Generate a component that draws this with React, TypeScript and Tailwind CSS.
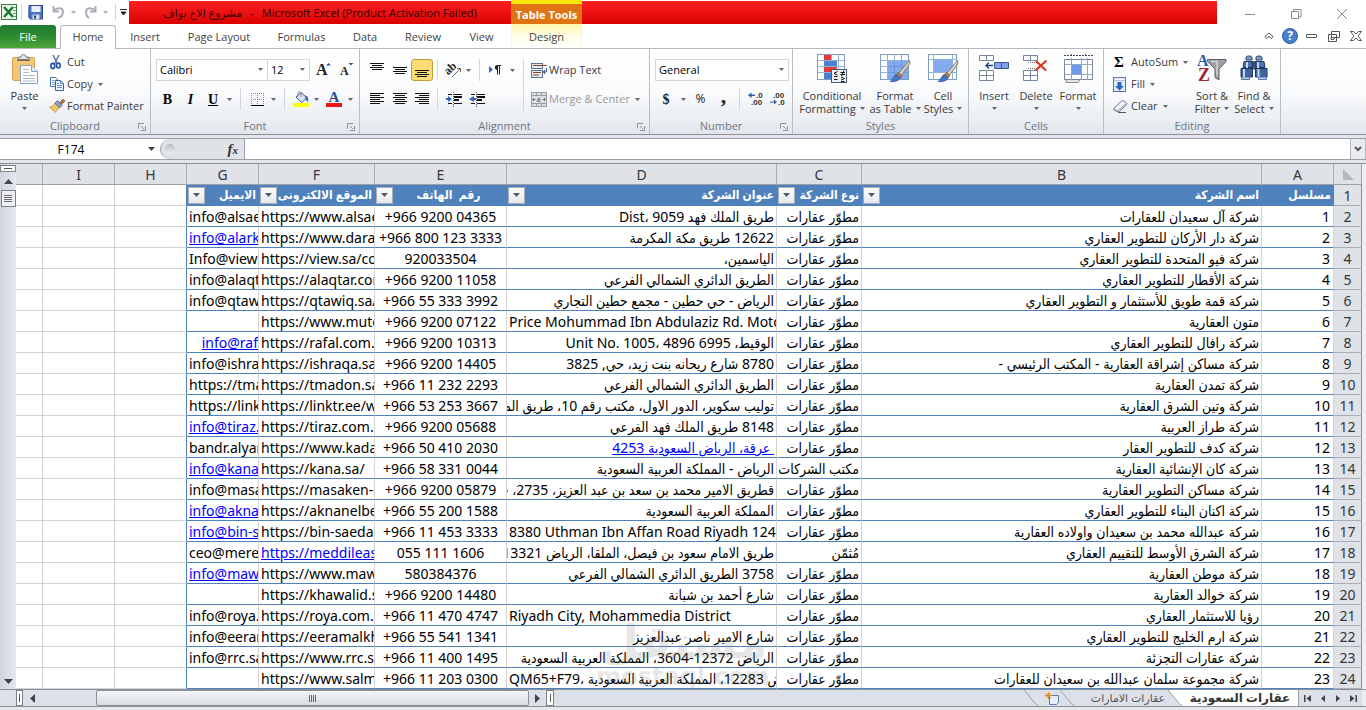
import React, { useState } from 'react';

type Row = {
  name: string;
  type?: string;
  address: string;
  addressDir?: 'ltr' | 'rtl';
  addressLink?: boolean;
  phone: string;
  site: string;
  siteLink?: boolean;
  email: string;
  emailLink?: boolean;
  emailEnd?: boolean;
};

const rows: Row[] = [
  { name: 'شركة آل سعيدان للعقارات', address: 'طريق الملك فهد 9059 ،Dist', phone: '+966 9200 04365', site: 'https://www.alsaedan', email: 'info@alsaed' },
  { name: 'شركة دار الأركان للتطوير العقاري', address: '12622 طريق مكة المكرمة', phone: '+966 800 123 3333', site: 'https://www.daralarkan', email: 'info@alarkan', emailLink: true },
  { name: 'شركة فيو المتحدة للتطوير العقاري', address: 'الياسمين،', phone: '920033504', site: 'https://view.sa/contact', email: 'Info@view.sa' },
  { name: 'شركة الأقطار للتطوير العقاري', address: 'الطريق الدائري الشمالي الفرعي', phone: '+966 9200 11058', site: 'https://alaqtar.com', email: 'info@alaqtar' },
  { name: 'شركة قمة طويق للأستثمار و التطوير العقاري', address: 'الرياض - حي حطين - مجمع حطين التجاري', phone: '+966 55 333 3992', site: 'https://qtawiq.sa/', email: 'info@qtawiq' },
  { name: 'متون العقارية', address: 'Price Mohummad Ibn Abdulaziz Rd. Motoon', addressDir: 'ltr', phone: '+966 9200 07122', site: 'https://www.mutoon', email: '' },
  { name: 'شركة رافال للتطوير العقاري', address: 'الوقيط، 6995 4896 ،Unit No. 1005', phone: '+966 9200 10313', site: 'https://rafal.com.sa', email: 'info@raf', emailLink: true, emailEnd: true },
  { name: 'شركة مساكن إشراقة العقارية - المكتب الرئيسي -', address: '8780 شارع ريحانه بنت زيد، حي, 3825', phone: '+966 9200 14405', site: 'https://ishraqa.sa/', email: 'info@ishraqa' },
  { name: 'شركة تمدن العقارية', address: 'الطريق الدائري الشمالي الفرعي', phone: '+966 11 232 2293', site: 'https://tmadon.sa/', email: 'https://tmadon' },
  { name: 'شركة وتين الشرق العقارية', address: 'توليب سكوير، الدور الاول، مكتب رقم 10، طريق الملك', phone: '+966 53 253 3667', site: 'https://linktr.ee/wateen', email: 'https://linktr.ee' },
  { name: 'شركة طراز العربية', address: '8148 طريق الملك فهد الفرعي', phone: '+966 9200 05688', site: 'https://tiraz.com.sa', email: 'info@tiraz.com', emailLink: true },
  { name: 'شركة كدف للتطوير العقار', address: '\u00a0عرقة، الرياض السعودية 4253', addressLink: true, phone: '+966 50 410 2030', site: 'https://www.kadaf', email: 'bandr.alyami' },
  { name: 'شركة كان الإنشائية العقارية', type: 'مكتب الشركات', address: 'الرياض - المملكة العربية السعودية', phone: '+966 58 331 0044', site: 'https://kana.sa/', email: 'info@kana.sa', emailLink: true },
  { name: 'شركة مساكن التطوير العقارية', address: 'قطريق الامير محمد بن سعد بن عبد العزيز، 2735، حي', phone: '+966 9200 05879', site: 'https://masaken-dev', email: 'info@masaken' },
  { name: 'شركة اكنان البناء للتطوير العقاري', address: 'المملكة العربية السعودية', phone: '+966 55 200 1588', site: 'https://aknanelbena', email: 'info@aknan', emailLink: true },
  { name: 'شركة عبدالله محمد بن سعيدان واولاده العقارية', address: '8380 Uthman Ibn Affan Road Riyadh 12475', addressDir: 'ltr', phone: '+966 11 453 3333', site: 'https://bin-saedan', email: 'info@bin-saedan', emailLink: true },
  { name: 'شركة الشرق الأوسط للتقييم العقاري', type: 'مُثمّن', address: 'طريق الامام سعود بن فيصل، الملقا، الرياض 13321', phone: '055 111 1606', site: 'https://meddileast', siteLink: true, email: 'ceo@mere' },
  { name: 'شركة موطن العقارية', address: '3758 الطريق الدائري الشمالي الفرعي', phone: '580384376', site: 'https://www.mawten', email: 'info@mawten', emailLink: true },
  { name: 'شركة خوالد العقارية', address: 'شارع أحمد بن شبانة', phone: '+966 9200 14480', site: 'https://khawalid.sa', email: '' },
  { name: 'رؤيا للاستثمار العقاري', address: 'Riyadh City, Mohammedia District', addressDir: 'ltr', phone: '+966 11 470 4747', site: 'https://roya.com.sa', email: 'info@roya.com' },
  { name: 'شركة ارم الخليج للتطوير العقاري', address: 'شارع الامير ناصر عبدالعزيز', phone: '+966 55 541 1341', site: 'https://eeramalkhaleej', email: 'info@eeram' },
  { name: 'شركة عقارات التجزئة', address: 'الرياض 12372-3604، المملكة العربية السعودية', phone: '+966 11 400 1495', site: 'https://www.rrc.sa', email: 'info@rrc.sa' },
  { name: 'شركة مجموعة سلمان عبدالله بن سعيدان للعقارات', address: 'QM65+F79، الرياض 12283، المملكة العربية السعودية', addressDir: 'ltr', phone: '+966 11 203 0300', site: 'https://www.salman', email: '' },
];

/* ---------- small shared parts ---------- */

function Caret({ className = 'text-[#5f6670]' }: { className?: string }) {
  return (
    <svg width="5" height="3" viewBox="0 0 5 3" className={`shrink-0 ${className}`} aria-hidden="true">
      <path d="M0 0h5L2.5 3z" fill="currentColor" />
    </svg>
  );
}

function Launcher() {
  return (
    <svg width="8" height="8" viewBox="0 0 8 8" fill="none" stroke="#8b929c" aria-hidden="true">
      <path d="M.5 5.500V.5H6M3 3l3 3M7.500 3v4.500H3" />
    </svg>
  );
}

function Sep({ className }: { className: string }) {
  return (
    <div className={`flex shrink-0 justify-center ${className}`}>
      <div className="w-px bg-[#d3d6db]" />
    </div>
  );
}

function Tool({ label, className, children }: { label: string; className: string; children: React.ReactNode }) {
  return (
    <button aria-label={label} className={`flex h-[22px] shrink-0 items-center justify-center ${className}`}>
      {children}
    </button>
  );
}

function Group({ title, className, launcher, children }: { title: string; className: string; launcher?: boolean; children: React.ReactNode }) {
  return (
    <section className={`flex shrink-0 flex-col border-r border-[#b9bec6] pt-0.5 ${className}`}>
      <div className="flex h-[66px]">{children}</div>
      <div className="flex h-[17px] items-center pt-0.5 text-[#6c7685]">
        <span className="w-3" />
        <span className="flex-1 text-center">{title}</span>
        <span className="w-3">{launcher && <Launcher />}</span>
      </div>
    </section>
  );
}

function BigButton({ icon, line1, line2, arrow = true, className }: { icon: React.ReactNode; line1: string; line2?: string; arrow?: boolean; className: string }) {
  return (
    <button className={`flex shrink-0 flex-col items-center whitespace-nowrap pt-[3px] leading-[13px] ${className}`}>
      <span className="mb-[5px] h-[30px]">{icon}</span>
      <span>{line1}</span>
      <span className="flex h-[13px] items-center gap-1">
        {line2}
        {arrow && <Caret />}
      </span>
    </button>
  );
}

function LineButton({ icon, text, arrow }: { icon: React.ReactNode; text: string; arrow?: boolean }) {
  return (
    <button className="flex h-[22px] items-center whitespace-nowrap">
      <span className="flex w-[18px] shrink-0">{icon}</span>
      {text}
      {arrow && <Caret className="ml-[5px] text-[#5f6670]" />}
    </button>
  );
}

function Lines({ xs, y = 0 }: { xs: [number, number][]; y?: number }) {
  return (
    <svg width="16" height="16" viewBox="0 0 16 16" stroke="#111" shapeRendering="crispEdges" aria-hidden="true">
      {xs.map(([a, b], i) => (
        <path key={i} d={`M${a} ${y + i * 2 + 0.5}H${b}`} />
      ))}
    </svg>
  );
}

/* ---------- ribbon drawings ---------- */

const PasteIcon = () => (
  <svg width="28" height="30" viewBox="0 0 28 30" aria-hidden="true">
    <rect x="1.500" y="3.500" width="22" height="23" rx="1.500" fill="#f3c678" stroke="#d9a350" />
    <path d="M7 5.500V3.200h3C10 1.400 11 .6 12.500.6S15 1.400 15 3.200h3v2.300z" fill="#e4e6e9" stroke="#6f7680" />
    <path d="M6 6.500h13" stroke="#83694a" />
    <path d="M9.500 11.500h11l6 6v12h-17z" fill="#fff" stroke="#8ba1c4" />
    <path d="M20.500 11.500v6h6" fill="#dfe7f3" stroke="#8ba1c4" />
    <path d="M12 15.500h6M12 18.500h6M12 21.500h12M12 24.500h12M12 27h12" stroke="#a9b9d4" />
  </svg>
);

const CutIcon = () => (
  <svg width="15" height="15" viewBox="0 0 15 15" fill="none" aria-hidden="true">
    <path d="M4 0l4.500 9M10 0L5.500 9" stroke="#62768f" strokeWidth="1.500" />
    <ellipse cx="3.800" cy="11" rx="2" ry="2.600" stroke="#23569f" strokeWidth="1.600" />
    <ellipse cx="9.400" cy="10.500" rx="1.800" ry="2.500" stroke="#23569f" strokeWidth="1.600" />
  </svg>
);

const CopyIcon = () => (
  <svg width="16" height="14" viewBox="0 0 16 14" aria-hidden="true">
    <path d="M1.500.5h5l3 3v6h-8z" fill="#fff" stroke="#4873b3" />
    <path d="M3 3.500h3M3 5.500h4M3 7.500h4" stroke="#7ca0d3" />
    <path d="M6.500 3.500h5l3 3v7h-8z" fill="#eef4fc" stroke="#3a62a3" />
    <path d="M11.500 3.500v3h3M8 8.500h5M8 10.500h5M8 6.500h2" fill="none" stroke="#6490cc" />
  </svg>
);

const PainterIcon = () => (
  <svg width="17" height="14" viewBox="0 0 17 14" aria-hidden="true">
    <path d="M10 4l4-4 2 2-4 4z" fill="#b5723a" stroke="#7c5127" strokeWidth=".6" />
    <path d="M6 4l2.500-2.500L13 6.500 10.500 9z" fill="#8fa6cc" stroke="#3d5a93" strokeWidth=".8" />
    <path d="M5.500 4.500L10 9l-4 4.500L.5 8C3 8 4.500 6.500 5.500 4.500z" fill="#f5d67c" stroke="#b58b2a" strokeWidth=".8" />
    <path d="M3 8.500l3 3M5 7l3 3" stroke="#c79a35" strokeWidth=".8" />
  </svg>
);

const BorderIcon = () => (
  <svg width="13" height="13" viewBox="0 0 13 13" shapeRendering="crispEdges" fill="none" aria-hidden="true">
    <path d="M0 .5h13M0 6.500h13M.5 0v12M6.500 0v12M12.500 0v12" stroke="#8a8a8a" strokeDasharray="1 1" />
    <path d="M0 12.500h13" stroke="#000" />
  </svg>
);

const FillColorIcon = () => (
  <svg width="17" height="16" viewBox="0 0 17 16" aria-hidden="true">
    <path d="M3 6l5-4.500L14 7l-5.500 4.500z" fill="#dce6f4" stroke="#41577c" />
    <path d="M5 5.500V2.500C5 0 8 0 8 2.500V6" fill="none" stroke="#7c889b" />
    <path d="M12 4.500c3 .5 4 3 3 6.500-1.500-1-2.500-2.500-3-4z" fill="#3f72b8" />
    <path d="M0 12h16v4H0z" fill="#ff0" />
  </svg>
);

const OrientationIcon = () => (
  <svg width="17" height="16" viewBox="0 0 17 16" aria-hidden="true">
    <text x="0" y="10" transform="rotate(-42 6 8)" fontSize="12" fontWeight="700" fontFamily="Liberation Serif, serif" fill="#222">ab</text>
    <path d="M7 15l8.500-8.500M12 6.500h3.500V10" fill="none" stroke="#666" />
  </svg>
);

const DirectionIcon = () => (
  <svg width="13" height="10" viewBox="0 0 13 10" aria-hidden="true">
    <path d="M0 1l4 3.500L0 8z" fill="#3566b5" />
    <path d="M12 .5H8M8.500.5v9M10.500.5v9" stroke="#222" fill="none" />
    <path d="M8.500 0C5 0 5 5 8.500 5z" fill="#222" />
  </svg>
);

const IndentIcon = ({ flip }: { flip?: boolean }) => (
  <svg width="17" height="15" viewBox="0 0 17 15" shapeRendering="crispEdges" aria-hidden="true">
    <path d="M2 2.500h4M8 2.500h8M8 5.500h8M8 8.500h5M2 11.500h4M8 11.500h8" stroke="#111" />
    <path d="M8 4.500h8M8 7.500h5" stroke="#111" />
    <path d="M7.500 0v15" stroke="#555" strokeDasharray="1 1" />
    <path d={flip ? 'M5 4v6L0 7z' : 'M2 4v6l4-3z'} fill="#2f62b3" shapeRendering="auto" />
    <path d={flip ? 'M5 7h2' : 'M0 7h3'} stroke="#2f62b3" strokeWidth="2" />
  </svg>
);

const WrapIcon = () => (
  <svg width="17" height="15" viewBox="0 0 17 15" aria-hidden="true" fill="none">
    <rect x=".5" y=".5" width="11" height="5" fill="#e6edf7" stroke="#5c7194" />
    <path d="M2 2.500h14" stroke="#8a3f28" />
    <rect x=".5" y="7.500" width="11" height="7" fill="#e6edf7" stroke="#5c7194" />
    <path d="M2 9.500h8M2 12h6" stroke="#8a3f28" />
    <path d="M15.500 5v4H13" stroke="#3a5f9a" />
    <path d="M14 6.500L11.500 9l2.500 2.500z" fill="#3a5f9a" />
  </svg>
);

const MergeIcon = () => (
  <svg width="16" height="15" viewBox="0 0 16 15" aria-hidden="true" fill="none" stroke="#9a9fa6">
    <rect x=".5" y=".5" width="15" height="14" fill="#dddfe2" />
    <path d="M.5 3.500h15M.5 11.500h15M5.500.5v3M10.500.5v3M5.500 11.500v3M10.500 11.500v3" />
    <path d="M1.500 7.500h3M3 6L1.500 7.500 3 9M14.500 7.500h-3M13 6l1.500 1.500L13 9" stroke="#777" />
    <text x="5.500" y="10" fontSize="8" fontWeight="700" fontFamily="Liberation Serif, serif" fill="#777" stroke="none">a</text>
  </svg>
);

const DecimalIcon = ({ less }: { less?: boolean }) => (
  <svg width="16" height="14" viewBox="0 0 16 14" aria-hidden="true">
    <text x={less ? 3 : 8} y="6" fontSize="8" fontWeight="700" fontFamily="Liberation Sans, sans-serif" fill="#333">{less ? '.00' : '.0'}</text>
    <text x={less ? 8 : 3} y="13" fontSize="8" fontWeight="700" fontFamily="Liberation Sans, sans-serif" fill="#333">{less ? '.0' : '.00'}</text>
    <path d={less ? 'M0 9.500h4v-2l3 2.500-3 2.500v-2H0z' : 'M7 2.500H3.500V.5L0 3.200 3.500 6V4H7z'} fill="#2f62b3" />
  </svg>
);

const Grid = ({ w = 27 }: { w?: number }) => (
  <>
    <rect x=".5" y=".5" width={w} height="25" fill="#fff" stroke="#7f9cc0" />
    <path d={`M7.500.5v25M14.500.5v25M21.500.5v25M.5 6.500h${w}M.5 12.500h${w}M.5 18.500h${w}`} stroke="#8fb4d8" />
  </>
);

const Brush = () => (
  <>
    <path d="M29.500 6.500L18 20l2.500 2.500L30 9.500z" fill="#d8d4ca" stroke="#75706a" strokeWidth=".9" />
    <path d="M18.500 18.500l3.500 3-2 2.500-4-3z" fill="#b8784a" stroke="#7a4b2a" strokeWidth=".6" />
    <path d="M16 20.500l4 3.500c-2 3.500-6 4-10 3.500 2.500-1 3-5 6-7z" fill="#4478c4" stroke="#2a5596" strokeWidth=".8" />
  </>
);

const ConditionalIcon = () => (
  <svg width="31" height="29" viewBox="0 0 31 29" aria-hidden="true">
    <Grid />
    <path d="M7 1h7v5H7zM7 13h13v5H7z" fill="#dd3b3b" />
    <path d="M7 7h13v5H7zM7 19h7v6H7z" fill="#4a80cd" />
    <rect x="14.500" y="15.500" width="15" height="13" fill="#eef2f7" stroke="#4c5c73" />
    <path d="M20.500 17.500l-3.500 1.800 3.500 1.800M17 22.500h3.500M24 23l3.500 1.500-3.500 1.500M24 27.500h3.500M17 25.500h3.500M23.500 18.500h4.500M23.500 20.500h4.500M27 16.500l-2.500 5.500" fill="none" stroke="#111" />
  </svg>
);

const FormatTableIcon = () => (
  <svg width="31" height="29" viewBox="0 0 31 29" aria-hidden="true">
    <Grid w={28} />
    <path d="M8 7h20v18H8z" fill="#86aaf0" />
    <path d="M14.500 7v18M21.500 7v18M8 12.500h20M8 18.500h20" stroke="#6f94d8" />
    <Brush />
  </svg>
);

const CellStylesIcon = () => (
  <svg width="31" height="29" viewBox="0 0 31 29" aria-hidden="true">
    <rect x=".5" y=".5" width="28" height="25" fill="#fff" stroke="#7f9cc0" />
    <path d="M5.500.5v25M24.500.5v25M.5 5.500h28M.5 18.500h28" stroke="#8fb4d8" />
    <path d="M6 6h18v12H6z" fill="#86aaf0" />
    <Brush />
  </svg>
);

const InsertIcon = () => (
  <svg width="31" height="28" viewBox="0 0 31 28" aria-hidden="true">
    <path d="M.5 1.500h14v5H.5zM7.500 1.500v5M.5 16.500h14v10H.5zM7.500 16.500v10M.5 21.500h14" fill="#fff" stroke="#76879f" />
    <path d="M15.500 8.500h14v6h-14z" fill="#7fa3ea" stroke="#38598f" />
    <path d="M22.500 8.500v6" stroke="#38598f" />
    <path d="M14 11.500H7M10 8.500l-3 3 3 3" fill="none" stroke="#1d3d78" strokeWidth="1.300" />
  </svg>
);

const DeleteIcon = () => (
  <svg width="26" height="28" viewBox="0 0 26 28" aria-hidden="true">
    <path d="M.5 1.500h14v5H.5zM7.500 1.500v5M.5 16.500h14v10H.5zM7.500 16.500v10M.5 21.500h14" fill="#fff" stroke="#76879f" />
    <path d="M5 8.500h10M5 14.500h10" stroke="#666" strokeDasharray="1 1" />
    <path d="M13 7l10 9.500M23.500 6.500L12.500 16.500" stroke="#e0351b" strokeWidth="2.200" />
  </svg>
);

const FormatIcon = () => (
  <svg width="31" height="30" viewBox="0 0 31 30" aria-hidden="true">
    <path d="M1 1.500h29M8.500 0v3M22.500 0v3" stroke="#3b4a60" strokeDasharray="2 1" />
    <path d="M1.500 5.500h28v20h-28z" fill="#fff" stroke="#76879f" />
    <path d="M8.500 4v22M18.500 4v22M24.500 4v22M1.500 10.500h28M1.500 20.500h28" stroke="#93a6c4" />
    <path d="M9 11h9v9H9z" fill="#6f98ea" />
    <path d="M3 26v2.500h12l2-2.500" fill="#e5e5e5" stroke="#8b8b8b" />
  </svg>
);

const FillDownIcon = () => (
  <svg width="13" height="15" viewBox="0 0 13 15" aria-hidden="true">
    <rect x=".5" y=".5" width="12" height="14" fill="#e4ecf8" stroke="#5471a3" />
    <path d="M1 1h11v2.500H1z" fill="#fff" stroke="#8aa2cb" strokeWidth=".6" />
    <path d="M4.500 5h4v4H11l-4.500 4.500L2 9h2.500z" fill="#2d68c0" />
  </svg>
);

const ClearIcon = () => (
  <svg width="15" height="13" viewBox="0 0 15 13" aria-hidden="true">
    <path d="M.8 8.500L8 1.500C9 .6 10 .5 11 1l2.300 1.700c.7.6.7 1.400 0 2.200L6.500 11.500H3.500L1 10z" fill="#eef1f6" stroke="#6c7b93" />
    <path d="M1 8.500L4.500 11 13 4" fill="none" stroke="#8d9ab0" />
    <path d="M5 12.500h8" stroke="#555" />
  </svg>
);

const SortIcon = () => (
  <svg width="31" height="31" viewBox="0 0 31 31" aria-hidden="true">
    <path d="M10.500 5.500h18.500v2l-7 7.500v11l-4-2.500V15l-7.500-7.500z" fill="#9c9fa4" stroke="#5c6066" />
    <path d="M14 7.500h6v14" stroke="#d4d6d9" strokeWidth="1.500" fill="none" />
    <text x="0" y="12" fontSize="16" fontWeight="700" fontFamily="Liberation Serif, serif" fill="#2c5ca8">A</text>
    <text x="1" y="27" fontSize="18" fontWeight="700" fontFamily="Liberation Serif, serif" fill="#a3262a">Z</text>
  </svg>
);

const FindIcon = () => (
  <svg width="28" height="28" viewBox="0 0 28 28" aria-hidden="true">
    <path d="M6 3.500C6 1.500 12 1.500 12 3.500V6H6zM16 3.500c0-2 6-2 6 0V6h-6z" fill="#7f9fc8" stroke="#2b4470" />
    <path d="M4 7.500h9v6H3zM15 7.500h9l1 6H15zM12 8h4v7h-4z" fill="#4c74b0" stroke="#22395f" />
    <path d="M1 14.500h11.500v8.500H1zM15.500 14.500H27v8.500H15.500z" fill="#3e66a2" stroke="#1f3558" />
    <path d="M1.500 23h8v2.500h-8zM18.500 23h8v2.500h-8z" fill="#b9cbe6" stroke="#5a77a6" />
    <path d="M4 15v8M18.500 15v8M7 8v6M18 8v6" stroke="#c4d6f0" strokeWidth="2" />
  </svg>
);

/* ---------- window chrome ---------- */

function TitleBar() {
  return (
    <div className="flex h-6">
      <div className="flex w-[129px] shrink-0 items-center pl-px">
        <svg width="17" height="17" viewBox="0 0 17 17" aria-label="Excel">
          <rect x=".5" y=".5" width="15" height="15" fill="#e9f4e7" stroke="#2e7b38" />
          <path d="M3 3l9 10M12 3L3 13" stroke="#1d7a32" strokeWidth="2.600" />
          <path d="M12 3.500h3M12 6.500h3M12 9.500h3M12 12.500h3" stroke="#5ba866" />
        </svg>
        <Sep className="ml-[3px] h-4 w-px" />
        <button aria-label="Save" className="ml-[6px]">
          <svg width="16" height="15" viewBox="0 0 16 15">
            <path d="M1 .5h13.500v13.500H2.500L.8 12.500z" fill="#4a74c8" stroke="#2c4a92" />
            <path d="M3.500 1h9v6h-9z" fill="#e8f0fb" />
            <path d="M4.500 9.500h7V14h-7z" fill="#d5dbe6" />
            <path d="M6 10.500h2v3H6z" fill="#253f7c" />
          </svg>
        </button>
        <button aria-label="Undo" className="ml-2">
          <svg width="13" height="14" viewBox="0 0 13 14" fill="none" stroke="#a9adb3">
            <path d="M1.500 1v5.500H7" strokeWidth="2" />
            <path d="M2 6c3-4 9-3.500 9 1 0 3-2 5-5 6" strokeWidth="2" />
          </svg>
        </button>
        <Caret className="ml-[6px] text-[#a9adb3]" />
        <button aria-label="Redo" className="ml-[8px]">
          <svg width="13" height="14" viewBox="0 0 13 14" fill="none" stroke="#a9adb3">
            <path d="M11.500 1v5.500H6" strokeWidth="2" />
            <path d="M11 6C8 2 2 2.500 2 7c0 3 1 5 3 6" strokeWidth="2" />
          </svg>
        </button>
        <Caret className="ml-[6px] text-[#a9adb3]" />
        <Sep className="ml-[7px] h-4 w-px" />
        <button aria-label="Customize Quick Access Toolbar" className="ml-1">
          <svg width="7" height="7" viewBox="0 0 7 7">
            <path d="M0 .5h7M1 3h5L3.500 6z" fill="#222" stroke="#222" />
          </svg>
        </button>
      </div>
      <div className="mt-px flex w-[382px] shrink-0 items-center justify-center bg-linear-to-b from-[#ff1f1f] to-[#d90000] pt-0.5 text-[#3b0000]">
        <h1 dir="ltr" className="flex gap-2 font-['Noto_Sans','DejaVu_Sans',sans-serif] text-[11px] whitespace-nowrap">
          <bdi>مشروع الاخ نواف</bdi>
          <span>-</span>
          <span>Microsoft Excel (Product Activation Failed)</span>
        </h1>
      </div>
      <div className="flex w-[71px] shrink-0 items-center justify-center border-t-4 border-[#ffe60a] bg-[#e07412] pt-0.5 text-[11px] font-bold whitespace-nowrap text-white">
        Table Tools
      </div>
      <div className="mt-px flex-1 bg-linear-to-b from-[#ff1f1f] to-[#d90000]" />
      <div className="flex w-[149px] shrink-0 items-center justify-between pt-1 pr-[19px] pl-7 text-[#8c8c8c]">
        <button aria-label="Minimize">
          <svg width="10" height="10" viewBox="0 0 10 10" stroke="currentColor"><path d="M0 5.500h10" /></svg>
        </button>
        <button aria-label="Restore">
          <svg width="11" height="11" viewBox="0 0 11 11" fill="none" stroke="currentColor"><path d="M.5 2.500h7v7h-7zM2.500 2.500v-2h7.500v7.500h-2" /></svg>
        </button>
        <button aria-label="Close">
          <svg width="10" height="10" viewBox="0 0 10 10" stroke="currentColor"><path d="M0 0l10 10M10 0L0 10" /></svg>
        </button>
      </div>
    </div>
  );
}

function TabBar() {
  return (
    <nav className="flex h-[25px] border-b border-[#b4b8be] text-[#444]">
      <button className="mt-px w-14 shrink-0 rounded-t-[3px] bg-linear-to-b from-[#1f7a2f] via-[#2d8a31] to-[#4fa83c] pt-0.5 text-white">File</button>
      <button className="-mb-px ml-1 mt-px w-14 shrink-0 rounded-t-[3px] border border-b-0 border-[#b4b8be] bg-white">Home</button>
      <button className="w-[58px] shrink-0 pt-0.5">Insert</button>
      <button className="w-[90px] shrink-0 pt-0.5">Page Layout</button>
      <button className="w-[75px] shrink-0 pt-0.5">Formulas</button>
      <button className="w-[52px] shrink-0 pt-0.5">Data</button>
      <button className="w-[64px] shrink-0 pt-0.5">Review</button>
      <button className="w-[53px] shrink-0 pt-0.5">View</button>
      <button className="ml-[3px] w-[71px] shrink-0 border-x border-[#f8f3dc] bg-linear-to-b from-[#fdf7a8] via-[#fffde6] to-white pt-0.5">Design</button>
      <div className="ml-auto flex items-center gap-2 pr-1">
        <button aria-label="Minimize the Ribbon">
          <svg width="10" height="8" viewBox="0 0 10 8" fill="#fff" stroke="#555"><path d="M5 1L1 4.500 2.500 6.500 5 4.500 7.500 6.500 9 4.500z" /></svg>
        </button>
        <button aria-label="Help" className="flex size-4 items-center justify-center rounded-full border border-[#2c59a8] bg-[#4a7fd0] text-[12px] leading-none font-bold text-white">?</button>
        <button aria-label="Minimize Window" className="w-[14px]">
          <svg width="12" height="5" viewBox="0 0 12 5" fill="#fff" stroke="#555"><rect x=".5" y=".5" width="10" height="3" rx=".5" /></svg>
        </button>
        <button aria-label="Restore Window" className="w-[14px]">
          <svg width="13" height="11" viewBox="0 0 13 11" fill="#fff" stroke="#555"><path d="M3.500.5h8v6h-8zM.5 3.500h8v7h-8zM3 6.500h3v2H3z" /></svg>
        </button>
        <button aria-label="Close Window">
          <svg width="12" height="10" viewBox="0 0 12 10" fill="#fff" stroke="#555"><path d="M.5.5h3L6 3 8.500.5h3L8 5l3.500 4.500h-3L6 7 3.500 9.500h-3L4 5z" /></svg>
        </button>
      </div>
    </nav>
  );
}

function Picker({ label, value, className }: { label: string; value: string; className: string }) {
  return (
    <div className={`relative flex h-[22px] shrink-0 ${className}`}>
      <select aria-label={label} className="w-full appearance-none border border-[#d3d6db] bg-white pl-[3px] text-black" defaultValue={value}>
        <option>{value}</option>
      </select>
      <span className="pointer-events-none absolute top-[9px] right-[5px]">
        <Caret />
      </span>
    </div>
  );
}

function Ribbon() {
  return (
    <div className="flex overflow-hidden border-b border-[#8b9097] bg-linear-to-b from-white via-[#fafbfc] to-[#e3e7ed] text-[#3a3a3a]">
      <Group title="Clipboard" className="w-[151px]" launcher>
        <BigButton icon={<PasteIcon />} line1="Paste" className="w-[49px]" />
        <div className="flex flex-col">
          <LineButton icon={<CutIcon />} text="Cut" />
          <LineButton icon={<CopyIcon />} text="Copy" arrow />
          <LineButton icon={<PainterIcon />} text="Format Painter" />
        </div>
      </Group>

      <Group title="Font" className="w-[209px]" launcher>
        <div className="flex flex-col gap-[7px] pt-2 pl-[5px]">
          <div className="flex">
            <Picker label="Font" value="Calibri" className="w-[112px]" />
            <Picker label="Font size" value="12" className="-ml-px w-[43px]" />
            <Tool label="Grow Font" className="w-[26px]">
              <svg width="15" height="16" viewBox="0 0 15 16">
                <text x="0" y="13" fontSize="16" fontWeight="700" fontFamily="Liberation Serif, serif" fill="#222">A</text>
                <path d="M10 3.500h5L12.500 1z" fill="#2f4f8f" />
              </svg>
            </Tool>
            <Tool label="Shrink Font" className="w-[22px]">
              <svg width="14" height="16" viewBox="0 0 14 16">
                <text x="0" y="13" fontSize="12" fontWeight="700" fontFamily="Liberation Serif, serif" fill="#222">A</text>
                <path d="M8.500 1h5L11 3.500z" fill="#2f4f8f" />
              </svg>
            </Tool>
          </div>
          <div className="flex font-['Liberation_Serif',serif] text-[14px] font-bold text-black">
            <Tool label="Bold" className="w-[23px]">B</Tool>
            <Tool label="Italic" className="w-[23px] italic">I</Tool>
            <Tool label="Underline" className="w-[22px] underline">U</Tool>
            <Tool label="Underline options" className="w-[11px]"><Caret /></Tool>
            <Sep className="h-[22px] w-[11px]" />
            <Tool label="Borders" className="w-[22px]"><BorderIcon /></Tool>
            <Tool label="Border options" className="w-[11px]"><Caret /></Tool>
            <Sep className="h-[22px] w-[11px]" />
            <Tool label="Fill Color" className="w-[22px]"><FillColorIcon /></Tool>
            <Tool label="Fill Color options" className="w-[9px]"><Caret /></Tool>
            <Tool label="Font Color" className="w-[25px]">
              <svg width="16" height="16" viewBox="0 0 16 16">
                <text x="2.500" y="11" fontSize="15" fontWeight="700" fontFamily="Liberation Serif, serif" fill="#2c4f90">A</text>
                <path d="M0 12h16v4H0z" fill="#f01414" />
              </svg>
            </Tool>
            <Tool label="Font Color options" className="w-[9px]"><Caret /></Tool>
          </div>
        </div>
      </Group>

      <Group title="Alignment" className="w-[290px]" launcher>
        <div className="flex pt-2 pl-[5px]">
          <div className="flex w-[153px] flex-col gap-[7px]">
            <div className="flex">
              <Tool label="Top Align" className="w-[23px]"><Lines y={1} xs={[[1, 15], [3, 13], [1, 15], [3, 13]]} /></Tool>
              <Tool label="Middle Align" className="w-[23px]"><Lines y={5} xs={[[1, 15], [3, 13], [1, 15], [3, 13]]} /></Tool>
              <Tool label="Bottom Align" className="w-[22px] rounded-[3px] border border-[#c29b3a] bg-[#fbdc77]"><Lines y={8} xs={[[1, 15], [3, 13], [1, 15], [3, 13]]} /></Tool>
              <Sep className="h-[22px] w-[9px]" />
              <Tool label="Orientation" className="w-[22px]"><OrientationIcon /></Tool>
              <Tool label="Orientation options" className="w-[9px]"><Caret /></Tool>
              <Sep className="h-[22px] w-3" />
              <Tool label="Text Direction" className="w-[21px]"><DirectionIcon /></Tool>
              <Tool label="Text Direction options" className="w-3"><Caret /></Tool>
            </div>
            <div className="flex">
              <Tool label="Align Left" className="w-[23px]"><Lines y={2} xs={[[1, 15], [1, 11], [1, 15], [1, 11], [1, 15], [1, 11]]} /></Tool>
              <Tool label="Center" className="w-[23px]"><Lines y={2} xs={[[1, 15], [3, 13], [1, 15], [3, 13], [1, 15], [3, 13]]} /></Tool>
              <Tool label="Align Right" className="w-[22px]"><Lines y={2} xs={[[1, 15], [5, 15], [1, 15], [5, 15], [1, 15], [5, 15]]} /></Tool>
              <Sep className="h-[22px] w-[9px]" />
              <Tool label="Decrease Indent" className="w-6"><IndentIcon /></Tool>
              <Tool label="Increase Indent" className="w-[22px]"><IndentIcon flip /></Tool>
            </div>
          </div>
          <Sep className="h-[52px] w-[10px]" />
          <div className="flex flex-col gap-[7px] pl-[3px]">
            <LineButton icon={<WrapIcon />} text="Wrap Text" />
            <div className="text-[#9a9a9a]">
              <LineButton icon={<MergeIcon />} text="Merge & Center" arrow />
            </div>
          </div>
        </div>
      </Group>

      <Group title="Number" className="w-[143px]" launcher>
        <div className="flex flex-col gap-[7px] pt-2 pl-[5px]">
          <Picker label="Number format" value="General" className="w-[134px]" />
          <div className="flex text-[12px] font-bold text-[#222]">
            <Tool label="Accounting Number Format" className="w-[22px] font-['Liberation_Serif',serif] text-[14px]">$</Tool>
            <Tool label="Accounting options" className="w-3"><Caret /></Tool>
            <Tool label="Percent Style" className="w-[23px] font-normal">%</Tool>
            <Tool label="Comma Style" className="w-[23px] pb-2 font-['Liberation_Serif',serif] text-[22px]">,</Tool>
            <Sep className="h-[22px] w-[9px]" />
            <Tool label="Increase Decimal" className="w-[23px]"><DecimalIcon /></Tool>
            <Tool label="Decrease Decimal" className="w-[22px]"><DecimalIcon less /></Tool>
          </div>
        </div>
      </Group>

      <Group title="Styles" className="w-[176px]">
        <div className="flex pl-1">
          <BigButton icon={<ConditionalIcon />} line1="Conditional" line2="Formatting" className="w-[70px]" />
          <BigButton icon={<FormatTableIcon />} line1="Format" line2="as Table" className="w-14" />
          <BigButton icon={<CellStylesIcon />} line1="Cell" line2="Styles" className="w-10" />
        </div>
      </Group>

      <Group title="Cells" className="w-[135px]">
        <div className="flex pl-[5px]">
          <BigButton icon={<InsertIcon />} line1="Insert" className="w-10" />
          <BigButton icon={<DeleteIcon />} line1="Delete" className="w-11" />
          <BigButton icon={<FormatIcon />} line1="Format" className="w-10" />
        </div>
      </Group>

      <Group title="Editing" className="w-[177px]">
        <div className="flex w-[87px] flex-col pl-[9px]">
          <LineButton icon={<span className="pl-px font-['Liberation_Serif',serif] text-[15px] leading-none font-bold text-black">Σ</span>} text="AutoSum" arrow />
          <LineButton icon={<FillDownIcon />} text="Fill" arrow />
          <LineButton icon={<ClearIcon />} text="Clear" arrow />
        </div>
        <BigButton icon={<SortIcon />} line1="Sort &" line2="Filter" className="w-[42px]" />
        <BigButton icon={<FindIcon />} line1="Find &" line2="Select" className="w-[42px]" />
      </Group>
    </div>
  );
}

function FormulaBar() {
  const [name, setName] = useState('F174');
  return (
    <div className="border-b border-[#8b9097] bg-[#e3e6eb] pt-[3px] pb-[3px]">
      <div className="flex h-[22px] border-y border-[#9a9fa8] bg-white">
        <input
          aria-label="Name Box"
          value={name}
          onChange={(e) => setName(e.target.value)}
          className="w-[142px] shrink-0 pt-0.5 text-center text-[12px] text-black outline-none"
        />
        <button aria-label="Name list" className="flex w-[18px] shrink-0 items-center justify-center">
          <svg width="7" height="4" viewBox="0 0 7 4"><path d="M0 0h7L3.500 4z" fill="#444" /></svg>
        </button>
        <div className="flex w-[85px] shrink-0 items-center justify-between rounded-l-full border-x border-[#9a9fa8] bg-[#dfe2e7] pr-1.5 pl-1">
          <span className="size-2.5 rounded-full bg-linear-to-b from-[#b5b9bf] to-[#f2f3f5]" />
          <button aria-label="Insert Function" className="font-['Liberation_Serif',serif] text-[15px] leading-none font-bold text-[#333] italic">
            f<span className="text-[11px]">x</span>
          </button>
        </div>
        <input aria-label="Formula Bar" className="min-w-0 flex-1 px-1 outline-none" />
        <button aria-label="Expand Formula Bar" className="flex w-4 shrink-0 items-center justify-center border-x border-[#b4b8be] bg-[#e9ebef]">
          <svg width="8" height="6" viewBox="0 0 8 6" fill="none" stroke="#555" strokeWidth="2"><path d="M1 1l3 3 3-3" /></svg>
        </button>
      </div>
    </div>
  );
}

/* ---------- sheet ---------- */

function HeadCell({ text, center }: { text: string; center?: boolean }) {
  return (
    <th className="h-[21px] border-b border-[#4f81bd] bg-[#4f81bd] p-0 pr-[3px] pl-px text-[12px] font-bold text-white">
      <div className="flex h-5 items-center justify-between overflow-hidden">
        <span className={center ? 'flex-1 text-center whitespace-pre' : 'whitespace-nowrap'}>{text}</span>
        <button aria-label={`Filter ${text}`} className="flex size-[17px] shrink-0 items-center justify-center border border-[#a9adb5] bg-linear-to-b from-white to-[#e4e7ec]">
          <svg width="7" height="4" viewBox="0 0 7 4"><path d="M0 0h7L3.500 4z" fill="#555b66" /></svg>
        </button>
      </div>
    </th>
  );
}

function Cell({ text, dir = 'rtl', align = 'text-start', href }: { text: string; dir?: 'ltr' | 'rtl'; align?: string; href?: boolean }) {
  return (
    <td className="h-[21px] border-r border-b border-r-[#d4d4d4] border-b-[#4f81bd] p-0">
      <div dir={dir} className={`h-5 overflow-hidden leading-[22px] whitespace-nowrap ${align}`}>
        {href ? <a href="#" className="text-[#0000ff] underline">{text}</a> : text}
      </div>
    </td>
  );
}

// empty cells left of the table: the first one carries the table's edge
function BlankCells() {
  return (
    <>
      <td className="border-r border-b border-r-[#4f81bd] border-b-[#d4d4d4]" />
      <td className="border-r border-b border-[#d4d4d4]" />
      <td className="border-r border-b border-[#d4d4d4]" />
    </>
  );
}

function RowNumber({ n }: { n: number }) {
  return (
    <th className="h-[21px] border-r border-b border-r-[#8b9097] border-b-[#a9aeb6] bg-[#dfe2e7] p-0 text-[#33373d]">
      <div className="h-5 overflow-hidden leading-[22px] font-normal">{n}</div>
    </th>
  );
}

const letters = ['A', 'B', 'C', 'D', 'E', 'F', 'G', 'H', 'I', ''];

function Sheet() {
  return (
    <div className="flex">
      <div className="flex w-4 shrink-0 flex-col items-center bg-linear-to-r from-[#cfd4de] to-[#e4e8f0]">
        <div className="mt-px flex h-[7px] w-full items-center justify-center border border-[#7b818b] bg-white"><span className="h-px w-2 bg-[#555]" /></div>
        <button aria-label="Scroll up" className="flex h-[18px] items-center">
          <svg width="9" height="5" viewBox="0 0 9 5"><path d="M0 5h9L4.500 0z" fill="#3f454e" /></svg>
        </button>
        <div className="flex h-[17px] w-[15px] flex-col items-center justify-center gap-px border border-[#7b818b] bg-[#eef0f4]">
          <span className="h-px w-2 bg-[#666]" />
          <span className="h-px w-2 bg-[#666]" />
          <span className="h-px w-2 bg-[#666]" />
          <span className="h-px w-2 bg-[#666]" />
        </div>
        <button aria-label="Scroll down" className="mt-auto flex h-4 items-center">
          <svg width="9" height="5" viewBox="0 0 9 5"><path d="M0 0h9L4.500 5z" fill="#3f454e" /></svg>
        </button>
      </div>

      <div className="relative min-w-0 flex-1">
        <table dir="rtl" className="w-full table-fixed border-separate border-spacing-0 bg-white font-['Noto_Sans','DejaVu_Sans_Condensed','DejaVu_Sans',sans-serif] text-[14px] text-black">
          <colgroup>
            <col className="w-[28px]" />
            <col className="w-[72px]" />
            <col className="w-[400px]" />
            <col className="w-[85px]" />
            <col className="w-[270px]" />
            <col className="w-[132px]" />
            <col className="w-[116px]" />
            <col className="w-[72px]" />
            <col className="w-[72px]" />
            <col className="w-[72px]" />
            <col />
          </colgroup>
          <thead>
            <tr className="bg-[#dfe2e7] text-[#33373d]">
              <th className="h-[21px] border-r border-b border-[#9a9fa8] p-0">
                <svg width="12" height="12" viewBox="0 0 12 12" className="mx-auto" aria-hidden="true"><path d="M1 1v11h11z" fill="#b3b8c0" /></svg>
              </th>
              {letters.map((l, i) => (
                <th key={i} className="h-[21px] border-r border-b border-r-[#a9aeb6] border-b-[#9a9fa8] p-0">
                  <div className="h-5 overflow-hidden leading-[22px] font-normal">{l}</div>
                </th>
              ))}
            </tr>
          </thead>
          <tbody>
            <tr>
              <RowNumber n={1} />
              <th className="h-[21px] border-b border-[#4f81bd] bg-[#4f81bd] p-0 px-[3px] text-start text-[12px] leading-5 font-bold text-white">مسلسل</th>
              <HeadCell text="اسم الشركة" />
              <HeadCell text="نوع الشركة" />
              <HeadCell text="عنوان الشركة" />
              <HeadCell text="رقم  الهاتف" center />
              <HeadCell text="الموقع الالكترونى" />
              <HeadCell text="الايميل" />
              <BlankCells />
            </tr>
            {rows.map((r, i) => (
              <tr key={i}>
                <RowNumber n={i + 2} />
                <Cell text={String(i + 1)} align="pr-[3px] text-start" />
                <Cell text={r.name} align="pr-0.5 text-start" />
                <Cell text={r.type ?? 'مطوّر عقارات'} align="pr-0.5 text-start" />
                <Cell text={r.address} dir={r.addressDir} href={r.addressLink} align={r.addressDir === 'ltr' ? 'pl-0.5 text-start' : 'pr-0.5 text-start'} />
                <Cell text={r.phone} dir="ltr" align="text-center" />
                <Cell text={r.site} dir="ltr" href={r.siteLink} align="pl-0.5 text-start" />
                <Cell text={r.email} dir="ltr" href={r.emailLink} align={r.emailEnd ? 'text-end' : 'pl-0.5 text-start'} />
                <BlankCells />
              </tr>
            ))}
          </tbody>
        </table>
        <div aria-hidden="true" className="pointer-events-none absolute bottom-0 left-[584px] flex w-[166px] flex-col items-center font-['DejaVu_Sans',sans-serif] font-bold text-[#808080]/20">
          <span className="text-[46px] leading-[46px]">مستقل</span>
          <span className="text-[24px] leading-[24px]">mostaql.com</span>
        </div>
      </div>
      <div className="w-1 shrink-0 bg-[#eceef2]" />
    </div>
  );
}

function SheetTabs() {
  return (
    <div className="flex h-[18px] items-stretch border-y border-[#8b9097] bg-[#dce0e8]">
      <div className="ml-4 flex w-[7px] shrink-0 items-center justify-center border border-[#7b818b] bg-white"><span className="h-2 w-px bg-[#555]" /></div>
      <button aria-label="Scroll left" className="flex w-[18px] shrink-0 items-center justify-center">
        <svg width="5" height="9" viewBox="0 0 5 9"><path d="M5 0v9L0 4.500z" fill="#3f454e" /></svg>
      </button>
      <div className="ml-[55px] flex w-[433px] shrink-0 items-center justify-center gap-px rounded-[2px] border border-[#8b9097] bg-linear-to-b from-[#f4f6f9] to-[#d8dce4]">
        <span className="h-[7px] w-px bg-[#666]" />
        <span className="h-[7px] w-px bg-[#666]" />
        <span className="h-[7px] w-px bg-[#666]" />
        <span className="h-[7px] w-px bg-[#666]" />
      </div>
      <button aria-label="Scroll right" className="flex w-[17px] shrink-0 items-center justify-center">
        <svg width="5" height="9" viewBox="0 0 5 9"><path d="M0 0v9l5-4.500z" fill="#3f454e" /></svg>
      </button>
      <div className="flex w-2 shrink-0 items-center justify-center border border-[#7b818b] bg-white"><span className="h-2 w-px bg-[#555]" /></div>
      <div className="ml-auto flex items-stretch text-[11px] leading-4">
        <svg width="14" height="16" viewBox="0 0 14 16" fill="none" stroke="#9a9fa8" aria-hidden="true"><path d="M0 0l10 12c1.500 2 2.500 3 4 3.500" /></svg>
        <button aria-label="Insert Worksheet" className="flex w-[22px] items-center justify-end">
          <svg width="15" height="13" viewBox="0 0 15 13">
            <path d="M4.500 3.500h9v7l-2 2h-7z" fill="#e8eef8" stroke="#5b79ad" />
            <path d="M3.500 0v7M0 3.500h7M1 1l5 5M6 1L1 6" stroke="#e08a2c" />
          </svg>
        </button>
        <svg width="14" height="16" viewBox="0 0 14 16" fill="none" stroke="#9a9fa8" aria-hidden="true"><path d="M0 0l10 12c1.500 2 2.500 3 4 3.500" /></svg>
        <button className="w-[94px] pl-3.5 whitespace-nowrap text-[#555]">عقارات الامارات</button>
        <svg width="14" height="16" viewBox="0 0 14 16" aria-hidden="true"><path d="M0 0l10 12c1.500 2 2.500 3 4 4V0z" fill="#fff" /><path d="M0 0l10 12c1.500 2 2.500 3 4 3.500" fill="none" stroke="#9a9fa8" /></svg>
        <button className="w-[116px] bg-white text-[12px] font-bold whitespace-nowrap text-[#333]">عقارات السعودية</button>
      </div>
      <div className="flex w-[64px] shrink-0 items-center justify-around border-l border-[#9a9fa8] text-[#3f454e]">
        <button aria-label="First sheet"><svg width="7" height="7" viewBox="0 0 7 7" fill="currentColor"><path d="M0 0h1.500v7H0zM7 0v7L2.500 3.500z" /></svg></button>
        <button aria-label="Previous sheet"><svg width="4" height="7" viewBox="0 0 4 7" fill="currentColor"><path d="M4 0v7L0 3.500z" /></svg></button>
        <button aria-label="Next sheet"><svg width="4" height="7" viewBox="0 0 4 7" fill="currentColor"><path d="M0 0v7l4-3.500z" /></svg></button>
        <button aria-label="Last sheet"><svg width="7" height="7" viewBox="0 0 7 7" fill="currentColor"><path d="M5.500 0H7v7H5.500zM0 0v7l4.500-3.500z" /></svg></button>
      </div>
      <div className="w-1 shrink-0 bg-[#eceef2]" />
    </div>
  );
}

export default function App() {
  return (
    <div className="overflow-hidden bg-white font-['Open_Sans','DejaVu_Sans',sans-serif] text-[11px]">
      <header>
        <TitleBar />
        <TabBar />
        <Ribbon />
        <FormulaBar />
      </header>
      <main>
        <Sheet />
        <SheetTabs />
      </main>
      <footer className="h-[3px] bg-[#e6e8ec]" />
    </div>
  );
}
